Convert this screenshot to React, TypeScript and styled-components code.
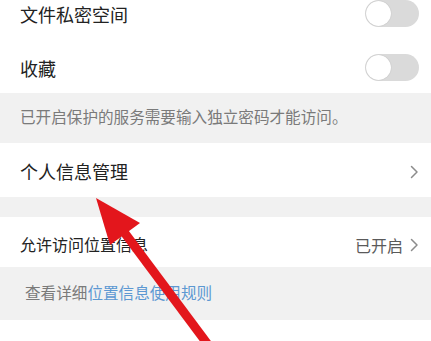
import styled, { createGlobalStyle } from 'styled-components';

const GlobalStyle = createGlobalStyle`
  html, body {
    margin: 0;
    padding: 0;
    background: #ffffff;
    overflow: hidden;
  }
  body {
    font-family: "Noto Sans CJK SC", "Noto Sans", sans-serif;
    color: #222222;
  }
`;

const Page = styled.div`
  position: relative;
  width: 431px;
  height: 341px;
  overflow: hidden;
  background: #ffffff;
`;

const List = styled.div`
  display: flex;
  flex-direction: column;
  margin-top: -12px;
`;

const Row = styled.div<{ $h: number; $pt?: number }>`
  display: flex;
  align-items: center;
  justify-content: space-between;
  box-sizing: border-box;
  height: ${p => p.$h}px;
  padding: ${p => p.$pt ?? 0}px 12px 0 20px;
  background: #ffffff;
`;

const Label = styled.span<{ $size?: number }>`
  font-size: ${p => p.$size ?? 18}px;
  line-height: 1.2;
  color: #222222;
`;

const Toggle = styled.div`
  position: relative;
  width: 54px;
  height: 27px;
  border-radius: 14px;
  background: #dadada;
  margin-top: -3px;

  &::after {
    content: '';
    position: absolute;
    top: 1px;
    left: 1px;
    width: 25px;
    height: 25px;
    border-radius: 50%;
    background: #ffffff;
    box-shadow: 0 0 1px rgba(0, 0, 0, 0.25);
  }
`;

const Band = styled.div<{ $h: number; $pt: number; $pl?: number }>`
  box-sizing: border-box;
  height: ${p => p.$h}px;
  padding: ${p => p.$pt}px 12px 0 ${p => p.$pl ?? 20}px;
  background: #f1f1f1;
`;

const Hint = styled.div<{ $size?: number }>`
  font-size: ${p => p.$size ?? 15.6}px;
  line-height: 20px;
  color: #7a7a7a;
  white-space: nowrap;
`;

const Link = styled.span`
  color: #5c98d2;
`;

const Right = styled.div`
  display: flex;
  align-items: center;
  gap: 7px;
  font-size: 16px;
  color: #5a5a5a;
`;

const Arrow = styled.svg`
  position: absolute;
  left: 0;
  top: 0;
  width: 431px;
  height: 341px;
  pointer-events: none;
`;

const Chevron = () => (
  <svg width="9" height="14" viewBox="0 0 9 14" fill="none">
    <path d="M1.5 1.5 L7 7 L1.5 12.5" stroke="#8c8c8c" strokeWidth="1.5" strokeLinecap="round" strokeLinejoin="round" />
  </svg>
);

export default function App() {
  return (
    <Page>
      <GlobalStyle />
      <List>
        <Row $h={54}>
          <Label>文件私密空间</Label>
          <Toggle />
        </Row>
        <Row $h={51} $pt={3}>
          <Label>收藏</Label>
          <Toggle />
        </Row>
        <Band $h={50} $pt={13}>
          <Hint>已开启保护的服务需要输入独立密码才能访问。</Hint>
        </Band>
        <Row $h={54} $pt={4}>
          <Label>个人信息管理</Label>
          <Chevron />
        </Row>
        <Band $h={20} $pt={0} />
        <Row $h={50} $pt={5}>
          <Label $size={16}>允许访问位置信息</Label>
          <Right>
            已开启
            <Chevron />
          </Right>
        </Row>
        <Band $h={53} $pt={15} $pl={25}>
          <Hint $size={15.6}>
            查看详细<Link>位置信息使用规则</Link>
          </Hint>
        </Band>
        <Row $h={40} />
      </List>
      <Arrow viewBox="0 0 431 341">
        <line x1="124" y1="232" x2="212" y2="350" stroke="#e3161c" strokeWidth="9" />
        <polygon points="96,198 140,223 110,245" fill="#e3161c" />
      </Arrow>
    </Page>
  );
}
